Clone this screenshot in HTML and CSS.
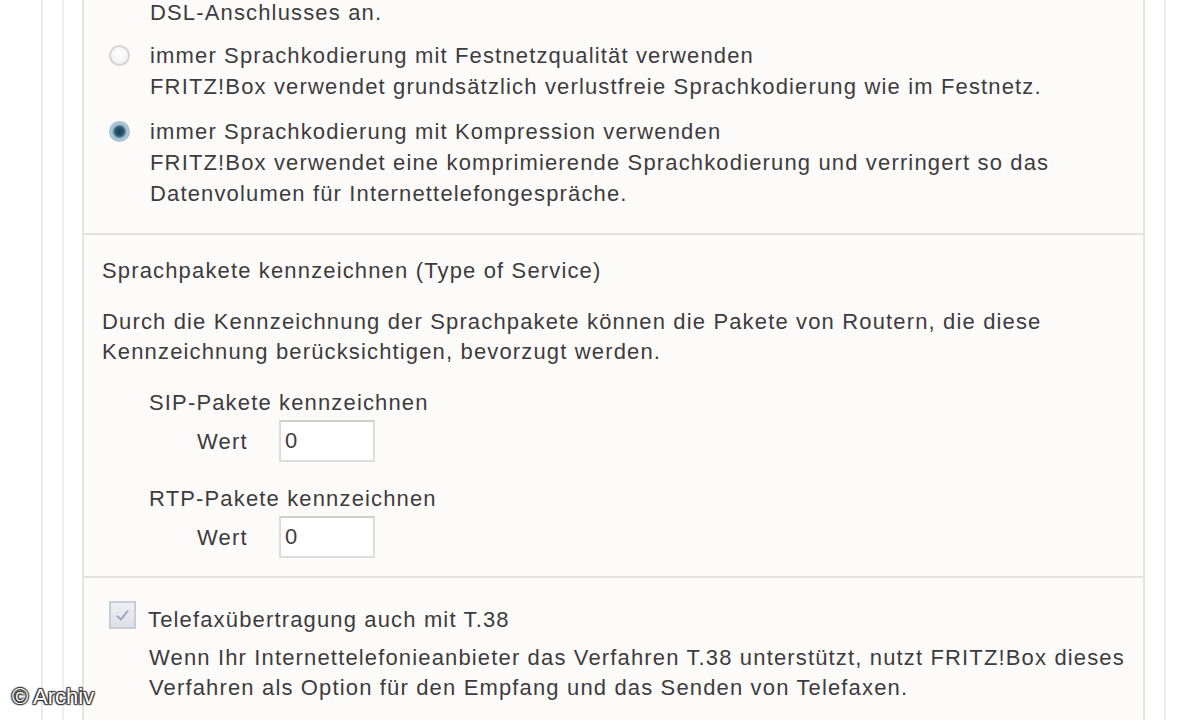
FILE: index.html
```html
<!DOCTYPE html>
<html lang="de">
<head>
<meta charset="utf-8">
<title>FRITZ!Box Internettelefonie</title>
<link rel="stylesheet" href="styles.css">
</head>
<body>
<div class="wrap">
  <div class="rail"></div>
  <div class="panel">
    <section class="sec sec-codec">
      <p class="tail">DSL-Anschlusses an.</p>
      <div class="opt">
        <span class="radio"></span>
        <div class="opt-text">
          <div>immer Sprachkodierung mit Festnetzqualität verwenden</div>
          <div>FRITZ!Box verwendet grundsätzlich verlustfreie Sprachkodierung wie im Festnetz.</div>
        </div>
      </div>
      <div class="opt">
        <span class="radio checked"></span>
        <div class="opt-text">
          <div>immer Sprachkodierung mit Kompression verwenden</div>
          <div>FRITZ!Box verwendet eine komprimierende Sprachkodierung und verringert so das<br>Datenvolumen für Internettelefongespräche.</div>
        </div>
      </div>
    </section>
    <section class="sec sec-tos">
      <p class="head">Sprachpakete kennzeichnen (Type of Service)</p>
      <p class="desc">Durch die Kennzeichnung der Sprachpakete können die Pakete von Routern, die diese<br>Kennzeichnung berücksichtigen, bevorzugt werden.</p>
      <div class="group">
        <p class="glabel">SIP-Pakete kennzeichnen</p>
        <div class="row"><span class="lbl">Wert</span><span class="input">0</span></div>
      </div>
      <div class="group">
        <p class="glabel">RTP-Pakete kennzeichnen</p>
        <div class="row"><span class="lbl">Wert</span><span class="input">0</span></div>
      </div>
    </section>
    <section class="sec sec-fax">
      <div class="chkrow">
        <span class="check"><svg viewBox="0 0 24 24" width="19" height="19"><path d="M5 12.5 L10 17 L19 6" fill="none" stroke="#9aa0b4" stroke-width="2.4"/></svg></span>
        <span class="chklabel">Telefaxübertragung auch mit T.38</span>
      </div>
      <p class="faxdesc">Wenn Ihr Internettelefonieanbieter das Verfahren T.38 unterstützt, nutzt FRITZ!Box dieses<br>Verfahren als Option für den Empfang und das Senden von Telefaxen.</p>
    </section>
  </div>
</div>
<div class="mark">© Archiv</div>
</body>
</html>
```
FILE: styles.css
```css
html, body {
  margin: 0;
  padding: 0;
  background: #ffffff;
  height: 720px;
  overflow: hidden;
}
body {
  font-family: "Liberation Sans", Arial, sans-serif;
  font-size: 22px;
  letter-spacing: 1.15px;
  line-height: 31px;
  color: #3e3b3e;
  position: relative;
}
p { margin: 0; }
.wrap {
  margin-left: 41px;
  width: 1121px;
  height: 720px;
  border-left: 2px solid #ececec;
  border-right: 2px solid #ececec;
  display: flex;
}
.rail {
  width: 19px;
  flex: none;
  border-right: 2px solid #efefef;
}
.panel {
  margin-left: 18px;
  width: 1059px;
  flex: none;
  border-left: 2px solid #e6e4e2;
  border-right: 2px solid #e6e4e2;
  background: #fdfbf9;
}
.sec-codec {
  margin-top: -3px;
  padding: 0 0 24px 25px;
  border-bottom: 2px solid #e4e2e0;
}
.tail {
  padding-left: 41px;
}
.opt {
  display: flex;
  align-items: flex-start;
  margin-top: 12px;
}
.opt + .opt { margin-top: 14px; }
.radio {
  flex: none;
  width: 21px;
  height: 21px;
  margin-top: 5px;
  margin-right: 20px;
  border-radius: 50%;
  border: 2px solid #d4d4d4;
  background: radial-gradient(circle at 50% 40%, #ffffff 0%, #ececec 100%);
  box-sizing: border-box;
}
.radio.checked {
  border-color: #a9c2d2;
  background: radial-gradient(circle, #1d3b52 0%, #2e5a72 38%, #9fc0d4 60%, #dbe8f0 100%);
}
.sec-tos {
  padding: 20px 0 18px 18px;
  border-bottom: 2px solid #e4e2e0;
}
.desc { margin-top: 21px; line-height: 30px; }
.group { padding-left: 47px; margin-top: 20px; }
.group + .group { margin-top: 21px; }
.row {
  display: flex;
  align-items: center;
  height: 42px;
  margin-top: 2px;
  padding-left: 48px;
}
.lbl { width: 82px; }
.input {
  box-sizing: border-box;
  width: 96px;
  height: 42px;
  border: 2px solid #dcdcdc;
  border-top-color: #cfcfcf;
  background: #ffffff;
  padding-left: 4px;
  line-height: 38px;
}
.sec-fax {
  padding: 23px 0 0 25px;
}
.chkrow {
  display: flex;
  align-items: flex-start;
}
.check {
  flex: none;
  box-sizing: border-box;
  width: 27px;
  height: 28px;
  border: 2px solid #c9cbd6;
  background: linear-gradient(#eeeff4, #dcdee8);
  display: flex;
  align-items: center;
  justify-content: center;
  margin-right: 12px;
}
.chklabel {
  padding-top: 3px;
}
.faxdesc {
  margin-top: 8px;
  padding-left: 40px;
  line-height: 30px;
}
.mark {
  position: absolute;
  left: 12px;
  top: 682px;
  font-size: 22px;
  letter-spacing: 0;
  line-height: 30px;
  color: #ffffff;
  text-shadow: 0 0 2px #333, 1px 1px 1px #333, -1px -1px 1px #333, 1px -1px 1px #333, -1px 1px 1px #333;
}
```
